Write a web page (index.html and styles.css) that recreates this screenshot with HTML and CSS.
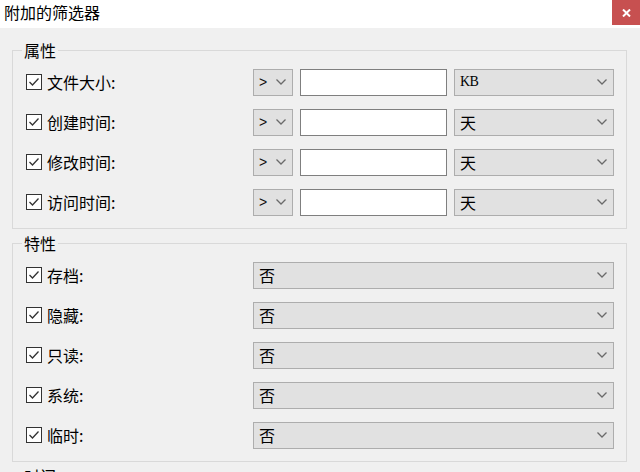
FILE: index.html
```html
<!DOCTYPE html>
<html lang="zh-CN">
<head>
<meta charset="utf-8">
<title>附加的筛选器</title>
<link rel="stylesheet" href="styles.css">
</head>
<body>
<div class="titlebar">
  <span class="title">附加的筛选器</span>
  <div class="close"><svg width="9" height="8" viewBox="0 0 9 8"><path d="M1 0.5 L8 7.5 M8 0.5 L1 7.5" stroke="#fff" stroke-width="2" fill="none"/></svg></div>
</div>

<fieldset class="group">
  <legend>属性</legend>
  <div class="row">
    <label class="check"><svg class="box" width="16" height="16" viewBox="0 0 16 16"><rect x="0.5" y="0.5" width="15" height="15" fill="#fff" stroke="#333"/><path d="M3.5 8 L6.5 11 L12.5 4.5" stroke="#333" stroke-width="1.3" fill="none"/></svg><span>文件大小:</span></label>
    <div class="combo small"><span class="op">&gt;</span><svg class="chev" width="10" height="6" viewBox="0 0 10 6"><path d="M0.5 0.5 L5 5 L9.5 0.5" stroke="#6a6a6a" stroke-width="1.3" fill="none"/></svg></div>
    <div class="input"></div>
    <div class="combo unit"><span class="val kb">KB</span><svg class="chev" width="10" height="6" viewBox="0 0 10 6"><path d="M0.5 0.5 L5 5 L9.5 0.5" stroke="#6a6a6a" stroke-width="1.3" fill="none"/></svg></div>
  </div>
  <div class="row">
    <label class="check"><svg class="box" width="16" height="16" viewBox="0 0 16 16"><rect x="0.5" y="0.5" width="15" height="15" fill="#fff" stroke="#333"/><path d="M3.5 8 L6.5 11 L12.5 4.5" stroke="#333" stroke-width="1.3" fill="none"/></svg><span>创建时间:</span></label>
    <div class="combo small"><span class="op">&gt;</span><svg class="chev" width="10" height="6" viewBox="0 0 10 6"><path d="M0.5 0.5 L5 5 L9.5 0.5" stroke="#6a6a6a" stroke-width="1.3" fill="none"/></svg></div>
    <div class="input"></div>
    <div class="combo unit"><span class="val">天</span><svg class="chev" width="10" height="6" viewBox="0 0 10 6"><path d="M0.5 0.5 L5 5 L9.5 0.5" stroke="#6a6a6a" stroke-width="1.3" fill="none"/></svg></div>
  </div>
  <div class="row">
    <label class="check"><svg class="box" width="16" height="16" viewBox="0 0 16 16"><rect x="0.5" y="0.5" width="15" height="15" fill="#fff" stroke="#333"/><path d="M3.5 8 L6.5 11 L12.5 4.5" stroke="#333" stroke-width="1.3" fill="none"/></svg><span>修改时间:</span></label>
    <div class="combo small"><span class="op">&gt;</span><svg class="chev" width="10" height="6" viewBox="0 0 10 6"><path d="M0.5 0.5 L5 5 L9.5 0.5" stroke="#6a6a6a" stroke-width="1.3" fill="none"/></svg></div>
    <div class="input"></div>
    <div class="combo unit"><span class="val">天</span><svg class="chev" width="10" height="6" viewBox="0 0 10 6"><path d="M0.5 0.5 L5 5 L9.5 0.5" stroke="#6a6a6a" stroke-width="1.3" fill="none"/></svg></div>
  </div>
  <div class="row">
    <label class="check"><svg class="box" width="16" height="16" viewBox="0 0 16 16"><rect x="0.5" y="0.5" width="15" height="15" fill="#fff" stroke="#333"/><path d="M3.5 8 L6.5 11 L12.5 4.5" stroke="#333" stroke-width="1.3" fill="none"/></svg><span>访问时间:</span></label>
    <div class="combo small"><span class="op">&gt;</span><svg class="chev" width="10" height="6" viewBox="0 0 10 6"><path d="M0.5 0.5 L5 5 L9.5 0.5" stroke="#6a6a6a" stroke-width="1.3" fill="none"/></svg></div>
    <div class="input"></div>
    <div class="combo unit"><span class="val">天</span><svg class="chev" width="10" height="6" viewBox="0 0 10 6"><path d="M0.5 0.5 L5 5 L9.5 0.5" stroke="#6a6a6a" stroke-width="1.3" fill="none"/></svg></div>
  </div>
</fieldset>

<fieldset class="group next">
  <legend>特性</legend>
  <div class="row">
    <label class="check"><svg class="box" width="16" height="16" viewBox="0 0 16 16"><rect x="0.5" y="0.5" width="15" height="15" fill="#fff" stroke="#333"/><path d="M3.5 8 L6.5 11 L12.5 4.5" stroke="#333" stroke-width="1.3" fill="none"/></svg><span>存档:</span></label>
    <div class="combo wide"><span class="val">否</span><svg class="chev" width="10" height="6" viewBox="0 0 10 6"><path d="M0.5 0.5 L5 5 L9.5 0.5" stroke="#6a6a6a" stroke-width="1.3" fill="none"/></svg></div>
  </div>
  <div class="row">
    <label class="check"><svg class="box" width="16" height="16" viewBox="0 0 16 16"><rect x="0.5" y="0.5" width="15" height="15" fill="#fff" stroke="#333"/><path d="M3.5 8 L6.5 11 L12.5 4.5" stroke="#333" stroke-width="1.3" fill="none"/></svg><span>隐藏:</span></label>
    <div class="combo wide"><span class="val">否</span><svg class="chev" width="10" height="6" viewBox="0 0 10 6"><path d="M0.5 0.5 L5 5 L9.5 0.5" stroke="#6a6a6a" stroke-width="1.3" fill="none"/></svg></div>
  </div>
  <div class="row">
    <label class="check"><svg class="box" width="16" height="16" viewBox="0 0 16 16"><rect x="0.5" y="0.5" width="15" height="15" fill="#fff" stroke="#333"/><path d="M3.5 8 L6.5 11 L12.5 4.5" stroke="#333" stroke-width="1.3" fill="none"/></svg><span>只读:</span></label>
    <div class="combo wide"><span class="val">否</span><svg class="chev" width="10" height="6" viewBox="0 0 10 6"><path d="M0.5 0.5 L5 5 L9.5 0.5" stroke="#6a6a6a" stroke-width="1.3" fill="none"/></svg></div>
  </div>
  <div class="row">
    <label class="check"><svg class="box" width="16" height="16" viewBox="0 0 16 16"><rect x="0.5" y="0.5" width="15" height="15" fill="#fff" stroke="#333"/><path d="M3.5 8 L6.5 11 L12.5 4.5" stroke="#333" stroke-width="1.3" fill="none"/></svg><span>系统:</span></label>
    <div class="combo wide"><span class="val">否</span><svg class="chev" width="10" height="6" viewBox="0 0 10 6"><path d="M0.5 0.5 L5 5 L9.5 0.5" stroke="#6a6a6a" stroke-width="1.3" fill="none"/></svg></div>
  </div>
  <div class="row">
    <label class="check"><svg class="box" width="16" height="16" viewBox="0 0 16 16"><rect x="0.5" y="0.5" width="15" height="15" fill="#fff" stroke="#333"/><path d="M3.5 8 L6.5 11 L12.5 4.5" stroke="#333" stroke-width="1.3" fill="none"/></svg><span>临时:</span></label>
    <div class="combo wide"><span class="val">否</span><svg class="chev" width="10" height="6" viewBox="0 0 10 6"><path d="M0.5 0.5 L5 5 L9.5 0.5" stroke="#6a6a6a" stroke-width="1.3" fill="none"/></svg></div>
  </div>
</fieldset>

<fieldset class="group next">
  <legend>时间</legend>
  <div class="row"></div>
</fieldset>
</body>
</html>
```

FILE: styles.css
```css
html, body {
  margin: 0;
  padding: 0;
}
body {
  width: 640px;
  height: 472px;
  overflow: hidden;
  background: #f0f0f0;
  font-family: "Noto Sans CJK SC", "Noto Sans", sans-serif;
  font-size: 16px;
  color: #000;
}
.titlebar {
  height: 28px;
  background: #fff;
  display: flex;
  justify-content: space-between;
  align-items: flex-start;
}
.title {
  padding-left: 4px;
  font-size: 16px;
  line-height: 25px;
}
.close {
  width: 28px;
  height: 25px;
  background: #c75050;
  display: flex;
  align-items: center;
  justify-content: center;
}
.group {
  margin: 12px 13px 0 12px;
  padding: 2px 12px 6px 13px;
  border: 1px solid #d9d9d9;
  min-width: 0;
}
.group.next {
  margin-top: 4px;
}
.group legend {
  padding: 0 2px;
  margin-left: -4px;
  font-size: 16px;
  line-height: 20px;
}
.row {
  height: 40px;
  display: flex;
  align-items: center;
}
.check {
  width: 227px;
  flex: none;
  display: flex;
  align-items: center;
  gap: 5px;
  line-height: 20px;
}
.box {
  flex: none;
  display: block;
}
.combo {
  box-sizing: border-box;
  height: 27px;
  border: 1px solid #adadad;
  background: #e1e1e1;
  display: flex;
  align-items: center;
  justify-content: space-between;
  padding: 0 6px 0 5px;
  flex: none;
}
.chev {
  display: block;
  flex: none;
}
.small {
  width: 40px;
}
.op {
  font-family: "Liberation Sans", sans-serif;
  font-size: 14px;
  line-height: 16px;
  color: #111;
}
.input {
  box-sizing: border-box;
  width: 147px;
  height: 27px;
  margin-left: 7px;
  background: #fff;
  border: 1px solid #7f7f7f;
  flex: none;
}
.unit {
  width: 160px;
  margin-left: 7px;
}
.wide {
  width: 361px;
}
.val {
  line-height: 20px;
  font-size: 16px;
}
.kb {
  font-family: "Liberation Serif", serif;
  font-size: 14px;
  letter-spacing: -0.5px;
}
```
